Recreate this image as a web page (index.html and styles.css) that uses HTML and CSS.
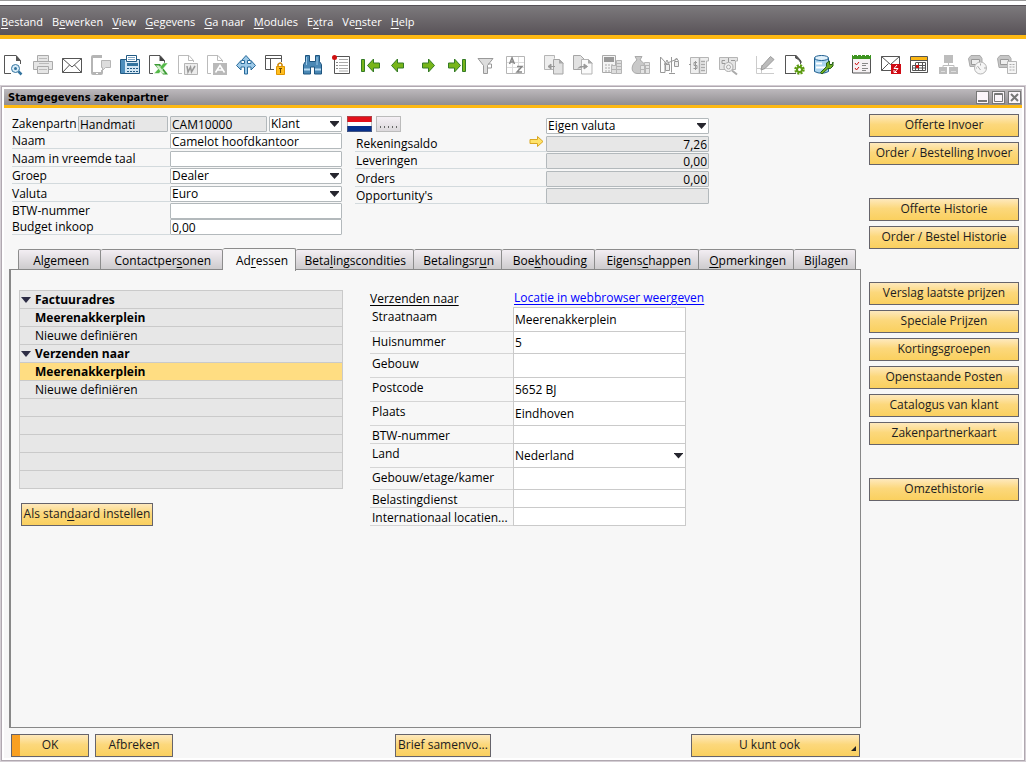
FILE: index.html
```
<!DOCTYPE html>
<html lang="nl">
<head>
<meta charset="utf-8">
<title>Stamgegevens zakenpartner</title>
<link rel="stylesheet" href="styles.css">
</head>
<body>
<nav class="menubar">
  <button><u>B</u>estand</button>
  <button>B<u>e</u>werken</button>
  <button><u>V</u>iew</button>
  <button><u>G</u>egevens</button>
  <button><u>G</u>a naar</button>
  <button><u>M</u>odules</button>
  <button>E<u>x</u>tra</button>
  <button>Ve<u>n</u>ster</button>
  <button><u>H</u>elp</button>
</nav>

<div class="toolbar" role="toolbar" aria-label="Werkbalk">
  <div class="group">
    <button aria-label="Afdrukvoorbeeld"><svg viewBox="0 0 20 20"><path d="M7 18.5H.5V.5H12l4.500 5V9" fill="none" stroke="#555"/><path d="M12 0v6h5z" fill="#555"/><circle cx="11.500" cy="13.500" r="4" fill="#d8ecf8" stroke="#34749f"/><circle cx="11.500" cy="13.500" r="1.500" fill="#34749f"/><path d="M14.500 16.500 17.500 19.500" stroke="#34749f" stroke-width="2.500"/></svg></button>
    <button class="off" aria-label="Afdrukken"><svg viewBox="0 0 20 20"><path d="M4.500 6V.5h11V6M.5 14.500V6.500h19v8h-4M.5 14.500h4M4.500 11.500h11v7h-11z" fill="#e6e6e6" stroke="#aaa"/><path d="M6 3.500h8M6 8.500h10M6 14.500h8" stroke="#bbb"/></svg></button>
    <button aria-label="E-mail"><svg viewBox="0 0 20 20"><path d="M.5 3.500h19v14H.5zM.5 3.500 10 12l9.500-8.500M.5 17.500l7-7.500M19.500 17.500l-7-7.500" fill="none" stroke="#555"/></svg></button>
    <button class="off" aria-label="SMS"><svg viewBox="0 0 20 20"><path d="M11 0H2Q0 0 0 2v16q0 2 2 2h8q2 0 2-2v-3h-2v2H2V3h9z" fill="#b5b5b5"/><path d="M5 18h2v1H5z" fill="#fff"/><path d="M10.500 5.500h9v7h-5l-3 3v-3h-1z" fill="#ddd" stroke="#b5b5b5"/></svg></button>
    <button aria-label="Fax"><svg viewBox="0 0 20 20"><path d="M.5 4.500h19v14H.5z" fill="#d3e7f5" stroke="#225a84"/><path d="M1 5h4v13H1z" fill="#4d8dbb"/><path d="M6.500.5h10v6h-10z" fill="#fff" stroke="#225a84"/><path d="M8 2.500h7M8 4.500h7" stroke="#7fa6c4"/><path d="M7 8h11v3H7z" fill="#34749f"/><path d="M7 13.500h11M7 16.500h11" stroke="#225a84" stroke-dasharray="2 1"/></svg></button>
    <button aria-label="Excel"><svg viewBox="0 0 20 20"><path d="M4 18.500H.5V.5H11l4.500 5V8" fill="none" stroke="#555"/><path d="M10.500 0v6h5.500z" fill="#444"/><path d="M5 9h6l8 10.500h-5z" fill="#3c9b35"/><path d="M19 8h-4.500L5 18.500h5z" fill="#54b948" stroke="#fff" stroke-width=".5"/><path d="M7 10.500h3l6 8h-3z" fill="#d5efcf"/></svg></button>
    <button class="off" aria-label="Word"><svg viewBox="0 0 20 20"><path d="M4 18.500H.5V.5H11l4.500 5V7M10.500.5v5h5" fill="none" stroke="#bbb"/><path d="M6.500 8.500h13v11h-13z" fill="#ececec" stroke="#b5b5b5"/><path d="m9 11 1 6 2.500-5 1 5 3.500-6" fill="none" stroke="#999" stroke-width="1.500"/></svg></button>
    <button class="off" aria-label="PDF"><svg viewBox="0 0 20 20"><path d="M4 18.500H.5V.5H11l4.500 5V7M10.500.5v5h5" fill="none" stroke="#bbb"/><path d="M6 8h14v12H6z" fill="#b9b9b9"/><path d="M8.500 17.500 13 10.500l4.500 7M10.500 15h5" fill="none" stroke="#fff" stroke-width="1.500"/></svg></button>
    <button aria-label="Verplaatsen"><svg viewBox="0 0 20 20"><path d="m10 .5 4.500 5h-3v3H15V5.500l4.500 5-4.500 4.500V12h-3.500v7h-3v-7H5v3L.5 10.500 5 5.500v3h3.500v-3h-3z" fill="#9cc9e8" stroke="#286a9a"/></svg></button>
    <button aria-label="Scherm vergrendelen"><svg viewBox="0 0 20 20"><path d="M9 14.500H.5V.5h16V7M0 3.500h17M5.500 4v10" fill="none" stroke="#555"/><path d="M13 12V9.500q2.500-3 4 0V12" fill="none" stroke="#c98200" stroke-width="1.500"/><path d="M11.500 11.500h8v8h-8z" fill="#ffbe20" stroke="#e09500"/><path d="M14 13.500h3M15.500 13v5" stroke="#714b00"/></svg></button>
  </div>
  <div class="group">
    <button aria-label="Zoeken"><svg viewBox="0 0 20 20"><path d="M2.500.5h4v6h6v-6h4v6l2 3v9.500h-7v-7h-4v7h-7V9.500l2-3z" fill="#4a88b5" stroke="#1d547f"/><path d="M1 14.500h6M12 14.500h6" stroke="#b9dbf2" stroke-width="2"/><path d="M3.500 2v8M14 2v8" stroke="#9cc9e8"/></svg></button>
    <button aria-label="Formulierinstellingen"><svg viewBox="0 0 20 20"><path d="M2.500 1.500h15v17h-15z" fill="#fff" stroke="#555"/><path d="M7 4.500h9M7 7.500h9M7 10.500h9M7 13.500h9M7 16h9" stroke="#aaa"/><path d="M4 7.500h2M4 10.500h2M4 13.500h2" stroke="#888"/><circle cx="2.500" cy="2.500" r="2.500" fill="#cf1010"/></svg></button>
    <button aria-label="Eerste record"><svg viewBox="0 0 20 20"><path d="M.5 4.500h3v12h-3z" fill="#78b51a" stroke="#347b27"/><path class="arrow" d="M12.500 4v4h6v5h-6v4l-6-6.500z"/></svg></button>
    <button aria-label="Vorige record"><svg viewBox="0 0 20 20"><path class="arrow" d="M7.500 4v4h6v5h-6v4l-6-6.500z"/></svg></button>
    <button aria-label="Volgende record"><svg viewBox="0 0 20 20"><path class="arrow" d="M9.500 4v4h-6v5h6v4l6-6.500z"/></svg></button>
    <button aria-label="Laatste record"><svg viewBox="0 0 20 20"><path d="M14.500 4.500h3v12h-3z" fill="#78b51a" stroke="#347b27"/><path class="arrow" d="M6.500 4v4h-6v5h6v4l6-6.500z"/></svg></button>
    <button class="off" aria-label="Filter"><svg viewBox="0 0 20 20"><path d="M1 3.500h15l-5.500 7v8h-4v-8z" fill="#ddd" stroke="#999"/><path d="M11 9h3.500v4H11" fill="none" stroke="#999"/></svg></button>
    <button class="off" aria-label="Sorteren"><svg viewBox="0 0 20 20"><path d="M.5 1.500h18v17H.5z" fill="#fff" stroke="#b5b5b5"/><path d="M1 7.500h17M1 12.500h17M6.500 2v16M12.500 2v16" stroke="#ddd"/><path d="m3.500 9 2.500-6 2.500 6M4.500 7h3M11 11.500h5l-5 5.500h5" fill="none" stroke="#888" stroke-width="1.500"/></svg></button>
  </div>
  <div class="group">
    <button class="off" aria-label="Basisdocument"><svg viewBox="0 0 20 20"><path d="M9 14.500H.5V.5h10v3" fill="#eee" stroke="#b5b5b5"/><path d="M9.500 4.500h6l3.500 3.500v11H9.500z" fill="#e2e2e2" stroke="#a5a5a5"/><path d="M15 4v4.500h5z" fill="#aaa"/><path d="M4 11.500h7M7 9l-3 2.500L7 14z" fill="#999" stroke="#999"/></svg></button>
    <button class="off" aria-label="Doeldocument"><svg viewBox="0 0 20 20"><path d="M.5.500h7l4 4v10H.5z" fill="#e2e2e2" stroke="#a5a5a5"/><path d="M8.500 4.500h7l3.500 3.500v11H8.500z" fill="#fafafa" stroke="#b5b5b5"/><path d="M15 4v4.500h5z" fill="#aaa"/><path d="M5 13.500 7 11.500h6M11 9l3.500 2.500L11 14z" fill="#999" stroke="#999"/></svg></button>
    <button class="off" aria-label="Brutowinst"><svg viewBox="0 0 20 20"><path d="M.5.5h13v17H.5z" fill="#f4f4f4" stroke="#aaa"/><path d="M2 2h10v5H2z" fill="#999"/><path d="M3 10h9M3 13h9M3 16h9" stroke="#aaa" stroke-dasharray="2 1"/><path d="M9.500 10.500h5v8h-5zM14.500 5.500h5v13h-5z" fill="#ddd" stroke="#b5b5b5"/><path d="M15 8.500h4M15 11.500h4M10 14.500h9" stroke="#b5b5b5"/></svg></button>
    <button class="off" aria-label="Betaalmiddelen"><svg viewBox="0 0 20 20"><path d="M4 1.500h7L9 5c7 4 7 13 0 13.500H6C-1 18 0 9 6 5z" fill="#c9c9c9" stroke="#aaa"/><path d="M9.500 10.500h5v8h-5zM13.500 7.500h5v11h-5z" fill="#e4e4e4" stroke="#b5b5b5"/><path d="M14 10.500h4M14 13.500h4M10 14.500h4" stroke="#b5b5b5"/></svg></button>
    <button class="off" aria-label="Volume en gewicht"><svg viewBox="0 0 20 20"><path d="M.5 17.500V2L5 7v10.500zM11.500 17.500V2M4 9.500 17 4M9 18.500h6" fill="none" stroke="#999"/><path d="M5.500 9.500h4v6h-4zM14.500 6.500h4v5h-4z" fill="#eee" stroke="#999"/><path d="m5 9 2-4 2 4M14.500 6l2-3 2 3" fill="none" stroke="#999"/></svg></button>
    <button class="off" aria-label="Transactiejournaal"><svg viewBox="0 0 20 20"><path d="M1.500 2.500h18V6h-2v12.500h-16z" fill="#eee" stroke="#b5b5b5"/><path d="M10.500 3v15M12 6.500h4M12 9.500h4M12 12.500h4M12 15.500h4" stroke="#aaa" stroke-width="1.500"/><path d="M8 7.500H5v3h3v3H4.500M6.500 6v9M0 9.500h2" fill="none" stroke="#999"/></svg></button>
    <button class="off" aria-label="Journaalvoorbeeld"><svg viewBox="0 0 20 20"><path d="M1.500 2.500h18V6h-2v8.500h-16z" fill="#e5e5e5" stroke="#b5b5b5"/><path d="M7 5.500H4v3h3M10.500 3v4M13 5.500h4" fill="none" stroke="#999"/><circle cx="10.500" cy="12" r="4.500" fill="#f2f2f2" stroke="#aaa"/><circle cx="10.500" cy="12" r="2" fill="none" stroke="#aaa"/><path d="m14 15.500 5 4" stroke="#aaa" stroke-width="2"/></svg></button>
  </div>
  <div class="group">
    <button class="off" aria-label="Lay-out bewerken"><svg viewBox="0 0 20 20"><path d="M.5 1v17.500H18M5.500 10v8M.5 13.500h16" fill="none" stroke="#ccc"/><path d="m5 15 1-4L14.500 1.500l3.500 3L9 13.500z" fill="#bbb" stroke="#999"/></svg></button>
    <button aria-label="Formulier instellen"><svg viewBox="0 0 20 20"><path d="M11 18.500H0M.5 19V.5H11l4.500 5V9" fill="none" stroke="#555"/><path d="M10.500 0v3l3 1.500L16 8V6z" fill="#555" stroke="#555"/><circle cx="14.500" cy="14.500" r="4" fill="none" stroke="#5d9b12" stroke-width="2.500" stroke-dasharray="2 1.140"/><circle cx="14.500" cy="14.500" r="2.500" fill="none" stroke="#5d9b12" stroke-width="2"/></svg></button>
    <button aria-label="Querymanager"><svg viewBox="0 0 20 20"><path d="M.5 3v13.500Q7.500 20 14.500 16.500V3" fill="#add5ef" stroke="#205f90"/><ellipse cx="7.500" cy="3" rx="7" ry="2.500" fill="#e2f2fc" stroke="#205f90"/><path d="M2 8.500h6M2 12.500h9" stroke="#fff" stroke-width="2"/><path d="m8 19-1.500-1.500 6-6V8l3-2v3.500h2.500l1-2.500v4l-2.500 2.500H14z" fill="#72ad23" stroke="#28601a"/></svg></button>
  </div>
  <div class="group">
    <button aria-label="Activiteiten"><svg viewBox="0 0 20 20"><path d="M.5.5h18v17.500H.5z" fill="#f6f2f4" stroke="#555"/><path d="M0 0h19v4H0z" fill="#3d9420"/><path d="M1 .5h17" stroke="#fff" stroke-dasharray="1 3"/><path d="m3 8 1.500 2L7 7M3 13l1.500 2L7 12" fill="none" stroke="#cf1010"/><path d="M10 8.500h6M10 10.500h4M10 13.500h6M10 15.500h4" stroke="#888"/></svg></button>
    <button aria-label="Berichten"><svg viewBox="0 0 20 20"><path d="M10 15.500H.5v-14h18V9M.5 1.500l9 8 9-8M.5 15.500l7-7" fill="none" stroke="#555"/><path d="M10 9h10v10H10z" fill="#d00a14"/><path d="m16 10-3 3.500h4L14 17M13 15v2.500h3" fill="none" stroke="#fff"/></svg></button>
    <button aria-label="Agenda"><svg viewBox="0 0 20 20"><path d="M.5 1.500h17v16H.5z" fill="#fff" stroke="#555"/><path d="M1 2h16v3H1z" fill="#fbb714"/><path d="M1 5.500h16M5.500 7.500h10v8h-13v-5h13M2.500 13h13M5.500 8v8M8.500 8v8M12.500 8v8" fill="none" stroke="#555"/><path d="M6 10h3v3H6z" fill="#cf1010"/></svg></button>
    <button class="off" aria-label="Relaties"><svg viewBox="0 0 20 20"><path d="M5 0h9v8H5zM0 12h8v7H0zM10 12h9v7h-9z" fill="#bdbdbd"/><path d="M9.500 8v2.500M4 12v-1.500h11V12" fill="none" stroke="#bdbdbd"/><path d="M2 16.500h4M12 16.500h5" stroke="#ddd"/></svg></button>
    <button class="off" aria-label="Dashboard"><svg viewBox="0 0 20 20"><path d="M.5 3.500 3 .5h9l2 3v8h-12z" fill="#c6c6c6" stroke="#aaa"/><path d="M3.500 4.500h8v5h-8z" fill="#eee" stroke="#999"/><circle cx="12.500" cy="13" r="6" fill="#f5f5f5" stroke="#b5b5b5"/><path d="m12.500 15-3-4M12.500 8.500v2M16 13h2M8 13h1" stroke="#aaa"/></svg></button>
    <button class="off" aria-label="Widgets"><svg viewBox="0 0 20 20"><path d="M.5 3.500 3 .5h9l2 3v9h-12z" fill="#c6c6c6" stroke="#aaa"/><path d="M3.500 4.500h8v5h-8z" fill="#eee" stroke="#999"/><path d="M10.500 6.500h9v12h-9z" fill="#f5f5f5" stroke="#b5b5b5"/><path d="M12.500 9.500h5M12.500 12h5M12.500 15h5" stroke="#aaa" stroke-dasharray="2 1"/></svg></button>
  </div>
</div>

<section class="window">
  <header class="titlebar">
    <h1>Stamgegevens zakenpartner</h1>
    <div class="controls">
      <button aria-label="Minimaliseren"><svg viewBox="0 0 11 11"><path d="M1 9h9" stroke="#777" stroke-width="2"/></svg></button>
      <button aria-label="Maximaliseren"><svg viewBox="0 0 11 11"><path d="M1.500 1.500h8v8h-8zM1 2.500h9" fill="none" stroke="#777"/></svg></button>
      <button aria-label="Sluiten"><svg viewBox="0 0 11 11"><path d="m2 2 7 7M9 2 2 9" stroke="#777" stroke-width="2"/></svg></button>
    </div>
  </header>

  <div class="content">
    <main>
      <div class="heads">
        <form class="partner">
          <div class="row code-row">
            <label for="code">Zakenpartn</label>
            <input class="ro series" aria-label="Reeks" value="Handmati" readonly>
            <input class="ro code" id="code" value="CAM10000" readonly>
            <span class="select type"><select aria-label="Type"><option>Klant</option></select></span>
          </div>
          <div class="row"><label for="naam">Naam</label><input id="naam" value="Camelot hoofdkantoor"></div>
          <div class="row"><label for="vreemd">Naam in vreemde taal</label><input id="vreemd"></div>
          <div class="row"><label for="groep">Groep</label><span class="select"><select id="groep"><option>Dealer</option></select></span></div>
          <div class="row"><label for="valuta">Valuta</label><span class="select"><select id="valuta"><option>Euro</option></select></span></div>
          <div class="row plain"><label for="btw">BTW-nummer</label><input id="btw"></div>
          <div class="row"><label for="budget">Budget inkoop</label><input id="budget" value="0,00"></div>
        </form>

        <div class="extras">
          <svg class="flag" viewBox="0 0 25 16" role="img" aria-label="Nederland"><path d="M0 0h25v16H0z" fill="#fff"/><path d="M0 0h25v6H0z" fill="#e3101b"/><path d="M0 10h25v6H0z" fill="#08308c"/><path d="M.5.5h24v15H.5z" fill="none" stroke="#777" stroke-opacity=".5"/></svg>
          <button class="dots" aria-label="Meer"><i></i><i></i><i></i><i></i><i></i></button>
        </div>

        <form class="balance">
          <div class="row currency"><span class="select"><select aria-label="Valutaweergave"><option>Eigen valuta</option></select></span></div>
          <div class="row"><label for="saldo">Rekeningsaldo
            <svg viewBox="0 0 15 11"><path d="M1 3.500h7.500v-3L14 5.500l-5.500 5v-3H1z" fill="#ffe36a" stroke="#d9a722"/></svg></label><input class="ro" id="saldo" value="7,26" readonly></div>
          <div class="row"><label for="lever">Leveringen</label><input class="ro" id="lever" value="0,00" readonly></div>
          <div class="row"><label for="orders">Orders</label><input class="ro" id="orders" value="0,00" readonly></div>
          <div class="row"><label for="opp">Opportunity's</label><input class="ro" id="opp" readonly></div>
        </form>
      </div>

      <div class="tabs" role="tablist">
        <button role="tab" class="roomy">Al<u>g</u>emeen</button>
        <button role="tab" class="roomy">Contactper<u>s</u>onen</button>
        <button role="tab" class="active" aria-selected="true">Ad<u>r</u>essen</button>
        <button role="tab">Beta<u>l</u>ingscondities</button>
        <button role="tab">Betalingsr<u>u</u>n</button>
        <button role="tab">Boe<u>k</u>houding</button>
        <button role="tab">Eigens<u>c</u>happen</button>
        <button role="tab"><u>O</u>pmerkingen</button>
        <button role="tab">Bi<u>j</u>lagen</button>
      </div>

      <div class="panel" role="tabpanel">
        <div class="addresses">
          <ul class="tree">
            <li class="parent">Factuuradres</li>
            <li class="default">Meerenakkerplein</li>
            <li>Nieuwe definiëren</li>
            <li class="parent">Verzenden naar</li>
            <li class="default selected">Meerenakkerplein</li>
            <li>Nieuwe definiëren</li>
            <li></li>
            <li></li>
            <li></li>
            <li></li>
            <li></li>
          </ul>
          <button class="btn">Als stan<u>d</u>aard instellen</button>
        </div>

        <form class="detail">
          <div class="detail-head"><span class="kind">Verzenden naar</span><a href="#kaart">Locatie in webbrowser weergeven</a></div>
          <div class="line first"><label for="straat">Straatnaam</label><input id="straat" value="Meerenakkerplein"></div>
          <div class="line mid"><label for="nummer">Huisnummer</label><input id="nummer" value="5"></div>
          <div class="line"><label for="gebouw">Gebouw</label><input id="gebouw"></div>
          <div class="line"><label for="postcode">Postcode</label><input id="postcode" value="5652 BJ"></div>
          <div class="line"><label for="plaats">Plaats</label><input id="plaats" value="Eindhoven"></div>
          <div class="line low"><label for="btw2">BTW-nummer</label><input id="btw2"></div>
          <div class="line"><label for="land">Land</label><span class="select"><select id="land"><option>Nederland</option></select></span></div>
          <div class="line mid"><label for="kamer">Gebouw/etage/kamer</label><input id="kamer"></div>
          <div class="line low"><label for="dienst">Belastingdienst</label><input id="dienst"></div>
          <div class="line low"><label for="gln">Internationaal locatien...</label><input id="gln"></div>
        </form>
      </div>

      <footer class="actions">
        <button class="btn ok">OK</button>
        <button class="btn cancel">Afbreken</button>
        <button class="btn letter">Brief samenvo...</button>
        <button class="btn also">U kunt ook</button>
      </footer>
    </main>

    <aside class="side">
      <div class="side-group">
        <button class="btn">Offerte Invoer</button>
        <button class="btn">Order / Bestelling Invoer</button>
      </div>
      <div class="side-group">
        <button class="btn">Offerte Historie</button>
        <button class="btn">Order / Bestel Historie</button>
      </div>
      <div class="side-group">
        <button class="btn">Verslag laatste prijzen</button>
        <button class="btn">Speciale Prijzen</button>
        <button class="btn">Kortingsgroepen</button>
        <button class="btn">Openstaande Posten</button>
        <button class="btn">Catalogus van klant</button>
        <button class="btn">Zakenpartnerkaart</button>
      </div>
      <div class="side-group">
        <button class="btn">Omzethistorie</button>
      </div>
    </aside>
  </div>
</section>
</body>
</html>
```
FILE: styles.css
```
* { box-sizing: border-box; }

body {
  margin: 0;
  min-height: 100vh;
  display: flex;
  flex-direction: column;
  background: #fff;
  border-top: 1px solid #999;
  font-family: "Open Sans", "Noto Sans", sans-serif;
  font-size: 12px;
  line-height: 16px;
  color: #000;
}

button, input, select {
  font: inherit;
  color: inherit;
  margin: 0;
  padding: 0;
  border: 0;
  border-radius: 0;
  background: none;
  min-width: 0;
}

u { text-underline-offset: 2px; }

/* Menu */
.menubar {
  display: flex;
  align-items: center;
  gap: 9px;
  height: 34px;
  margin-top: 4px;
  padding: 3px 1px 0;
  border-top: 1px solid #555055;
  border-bottom: 4px solid #fdb913;
  background: linear-gradient(#7c797c, #595358);
  color: #fff;
  font-size: 11px;
}

/* Toolbar */
.toolbar {
  display: flex;
  gap: 18px;
  height: 47px;
  padding: 15px 4px 0;
}
.group { display: flex; gap: 9px; }
.toolbar button { width: 20px; height: 22px; }
.toolbar svg { display: block; width: 20px; height: 20px; overflow: visible; }
.arrow { fill: #78b51a; stroke: #347b27; }

/* Window */
.window {
  flex: 1;
  display: flex;
  flex-direction: column;
  margin: 0 1px 2px 1px;
  border: 1px solid #b0a8b0;
  outline: 1px solid #d4ced4;
  padding: 2px;
  background: #fff;
}
.titlebar {
  display: flex;
  align-items: center;
  justify-content: space-between;
  height: 19px;
  padding: 0 1px 0 4px;
  border-bottom: 3px solid #fdb913;
  background: linear-gradient(#bdb9bd, #918e91);
}
.titlebar h1 {
  margin: 0;
  padding-top: 2px;
  font-family: "DejaVu Sans Condensed", "Open Sans", sans-serif;
  font-size: 11px;
  line-height: 16px;
}
.controls { display: flex; gap: 3px; }
.controls button {
  width: 13px;
  height: 13px;
  border: 1px solid #777;
  background: #fbf5fa;
}
.controls svg { display: block; width: 11px; height: 11px; }

.content {
  flex: 1;
  display: flex;
  gap: 8px;
  padding: 6px 3px 1px 5px;
  background: #f7f7f7;
}
main { flex: 1; display: flex; flex-direction: column; min-width: 0; }

/* Field rows */
.heads { display: flex; height: 134px; padding: 2px 0 0 3px; }
.row { display: flex; height: 16px; }
.row label {
  flex: 1;
  min-width: 0;
  height: 16px;
  line-height: 15px;
  border-bottom: 1px solid #d3dadd;
  white-space: nowrap;
}
.row input, .row .select {
  width: 172px;
  height: 16px;
  border: 1px solid #b3b9bc;
  border-radius: 1px;
  background: #fff;
}
input, select { padding: 0 1px; line-height: 14px; outline: 0; }
.row .ro { background: #e7e7e7; }
.select { position: relative; display: flex; }
.select select { flex: 1; width: 100%; appearance: none; }
.select::after {
  content: "";
  position: absolute;
  right: 2px;
  top: 50%;
  width: 9px;
  height: 6px;
  margin-top: -3px;
  background: #26262e;
  clip-path: polygon(0 0, 100% 0, 100% 17%, 50% 100%, 0 17%);
  pointer-events: none;
}

.partner {
  width: 330px;
  display: grid;
  grid-template-columns: minmax(0, 1fr);
  grid-template-rows: 17px 18px 17px 18px 17px 16px 16px;
}
.plain label { border-bottom-color: transparent; }
.code-row { gap: 2px; }
.code-row label { flex: 1 0 auto; margin-right: -2px; }
.code-row .series { width: 90px; }
.code-row .code { width: 97px; }
.code-row .type { width: 73px; }

.extras { display: flex; gap: 4px; height: 16px; margin-left: 5px; }
.flag { width: 25px; height: 16px; }
.dots {
  display: flex;
  align-items: flex-end;
  justify-content: center;
  gap: 3px;
  width: 25px;
  padding-bottom: 3px;
  border: 1px solid #bbb;
  background: linear-gradient(#f5f0f5, #dcd9dc);
}
.dots i { width: 1px; height: 2px; background: #666; }

.balance {
  width: 354px;
  margin: 2px 0 0 -46px;
  display: grid;
  grid-template-rows: 18px 17px 18px 17px 16px;
  align-content: start;
}
.balance .currency { justify-content: flex-end; }
.balance .row input, .balance .select { width: 163px; text-align: right; }
.balance .select select { text-align: left; }
.balance label { display: flex; justify-content: space-between; padding: 0 2px 0 1px; }
.balance label svg { width: 15px; height: 11px; }

/* Tabs */
.tabs {
  display: grid;
  grid-template-columns: 83px 122px 73px 118px 88px 93px 104px 95px 62px;
  align-items: end;
  height: 22px;
  margin: 0 0 -1px 9px;
}
.tabs button {
  height: 20px;
  margin-bottom: 1px;
  padding: 2px 7px 0 0;
  border: 1px solid #8c8c8c;
  border-left-width: 0;
  border-bottom: 0;
  border-radius: 2px 2px 0 0;
  background: linear-gradient(#f3eef3, #cdcbcd);
  text-align: right;
  white-space: nowrap;
}
.tabs .roomy { padding-right: 11px; }
.tabs button:first-child { border-left-width: 1px; }
.tabs .active {
  height: 23px;
  margin: 0 0 -1px;
  position: relative;
  background: #f7f7f7;
}

.panel {
  flex: 1;
  display: flex;
  align-items: flex-start;
  gap: 26px;
  padding: 20px 8px 0;
  border: 1px solid #888;
  border-left-width: 2px;
}

/* Address tree */
.addresses { width: 324px; }
.tree {
  list-style: none;
  margin: 0 0 14px;
  padding: 0;
  border: 1px solid #cacaca;
  border-bottom: 0;
  background: #e7e7e7;
}
.tree li {
  position: relative;
  height: 18px;
  padding-left: 15px;
  border-bottom: 1px solid #cacaca;
  line-height: 17px;
}
.tree .parent, .tree .default { font-weight: bold; }
.tree .parent::before {
  content: "";
  position: absolute;
  left: 1px;
  top: 6px;
  width: 10px;
  height: 6px;
  background: #2d2d45;
  clip-path: polygon(0 0, 100% 0, 50% 100%);
}
.tree .selected { background: #ffdd82; }
.addresses .btn { width: 132px; margin-left: 2px; }

/* Address detail */
.detail { width: 336px; }
.detail-head { display: flex; height: 17px; line-height: 15px; padding-left: 1px; white-space: nowrap; }
.kind { text-decoration: underline; text-underline-offset: 2px; flex: 0 0 144px; line-height: 17px; }
.detail-head a { color: #00f; text-underline-offset: 2px; }
.line { display: flex; width: 317px; height: 24px; }
.mid { height: 22px; }
.low { height: 18px; }
.line label {
  flex: 1;
  margin-left: 1px;
  padding-left: 2px;
  line-height: 20px;
  border-bottom: 1px solid #d5d5d5;
  white-space: nowrap;
}
.line input, .line .select {
  width: 173px;
  border: 1px solid #cacaca;
  border-top: 0;
  background: #fff;
}
.line.first input { border-top: 1px solid #cacaca; }
.line.first { height: 25px; }

/* Buttons */
.btn {
  height: 23px;
  padding-bottom: 2px;
  border: 1px solid #66646b;
  background: linear-gradient(#fee9bd, #fcd87c 45%, #fad05f);
  color: #1c1c22;
  text-align: center;
  white-space: nowrap;
}
.actions { display: flex; gap: 6px; padding: 6px 1px 0 2px; }
.ok {
  width: 78px;
  background: linear-gradient(90deg, #f9a021 8px, transparent 8px), linear-gradient(#fee9bd, #fcd87c 45%, #fad05f);
}
.cancel { width: 78px; }
.letter { width: 96px; margin: 0 auto 0 216px; }
.also { position: relative; width: 169px; padding-right: 12px; }
.also::after {
  content: "";
  position: absolute;
  right: 3px;
  bottom: 5px;
  width: 5px;
  height: 5px;
  background: #222;
  clip-path: polygon(100% 0, 100% 100%, 0 100%);
}
.side { width: 150px; display: flex; flex-direction: column; gap: 33px; }
.side-group { display: flex; flex-direction: column; gap: 5px; }
```
